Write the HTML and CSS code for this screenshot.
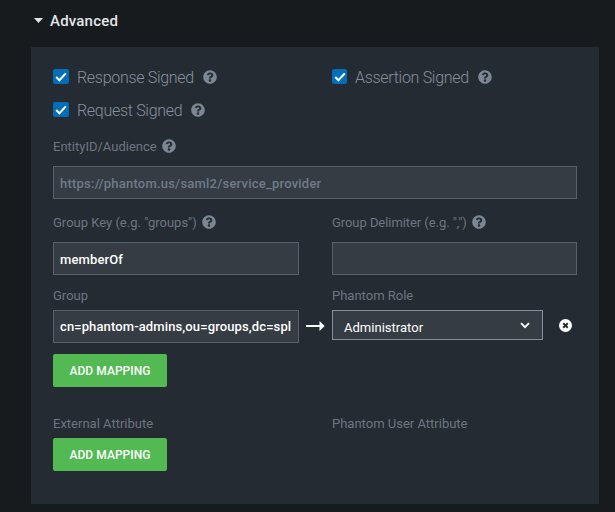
FILE: index.html
```
<!DOCTYPE html>
<html lang="en">
<head>
<meta charset="utf-8">
<title>Advanced</title>
<link rel="stylesheet" href="styles.css">
</head>
<body>
<svg class="defs" width="0" height="0">
  <symbol id="help" viewBox="0 0 512 512"><path fill="currentColor" d="M504 256c0 136.997-111.043 248-248 248S8 392.997 8 256C8 119.083 119.043 8 256 8s248 111.083 248 248zM262.655 90c-54.497 0-89.255 22.957-116.549 63.758-3.536 5.286-2.353 12.415 2.715 16.258l34.699 26.31c5.205 3.947 12.621 3.008 16.665-2.122 17.864-22.658 30.113-35.797 57.303-35.797 20.429 0 45.698 13.148 45.698 32.958 0 14.976-12.363 22.667-32.534 33.976C247.128 238.528 216 254.941 216 296v4c0 6.627 5.373 12 12 12h56c6.627 0 12-5.373 12-12v-1.333c0-28.462 83.186-29.647 83.186-106.667 0-58.002-60.165-102-116.531-102zM256 338c-25.365 0-46 20.635-46 46 0 25.364 20.635 46 46 46s46-20.636 46-46c0-25.365-20.635-46-46-46z"/></symbol>
  <symbol id="check" viewBox="0 0 16 15"><path d="M3.2 8.1 6.4 11.2 12.8 4.4" fill="none" stroke="#fff" stroke-width="2.1"/></symbol>
</svg>
<div class="heading"><svg class="caret" viewBox="0 0 9 5"><path d="M0 0h9L4.5 5z" fill="currentColor"/></svg><h1>Advanced</h1></div>
<main class="panel">
  <div class="row checks">
    <div class="option"><span class="box"><svg><use href="#check"/></svg></span><span>Response Signed</span><svg class="help"><use href="#help"/></svg></div>
    <div class="option"><span class="box narrow"><svg><use href="#check"/></svg></span><span>Assertion Signed</span><svg class="help"><use href="#help"/></svg></div>
    <div class="option"><span class="box"><svg><use href="#check"/></svg></span><span>Request Signed</span><svg class="help"><use href="#help"/></svg></div>
  </div>
  <section class="entity">
    <div class="label"><span>EntityID/Audience</span><svg class="help"><use href="#help"/></svg></div>
    <div class="input placeholder">https://phantom.us/saml2/service_provider</div>
  </section>
  <section class="row keys">
    <div><div class="label"><span>Group Key (e.g. "groups")</span><svg class="help"><use href="#help"/></svg></div><div class="input">memberOf</div></div>
    <div><div class="label delimiter"><span>Group Delimiter (e.g. ",")</span><svg class="help"><use href="#help"/></svg></div><div class="input"></div></div>
  </section>
  <section class="mapping">
    <div class="group"><div class="label">Group</div><div class="input dn">cn=phantom-admins,ou=groups,dc=spl</div></div>
    <svg class="arrow" viewBox="0 0 19 12"><path d="M0 5h13.5V1l5.2 5-5.2 5V7H0z" fill="currentColor"/></svg>
    <div class="role"><div class="label">Phantom Role</div><div class="select"><span>Administrator</span><svg viewBox="0 0 10 7"><path d="m1 1.2 4 4 4-4" fill="none" stroke="currentColor" stroke-width="1.8"/></svg></div></div>
    <svg class="remove" viewBox="0 0 12 12"><circle cx="6" cy="6" r="6" fill="#fff"/><path d="m3.9 3.9 4.2 4.2m0-4.2L3.9 8.1" stroke="#252b33" stroke-width="1.7"/></svg>
  </section>
  <button>ADD MAPPING</button>
  <section class="row attributes"><div class="label">External Attribute</div><div class="label">Phantom User Attribute</div></section>
  <button>ADD MAPPING</button>
</main>
</body>
</html>
```
FILE: styles.css
```
* { box-sizing: border-box; }
body { margin: 0; height: 512px; overflow: hidden; background: #171b1e; color: #fff; font-family: Roboto, "Liberation Sans", sans-serif; }
svg { display: block; flex: none; }
.defs { position: absolute; }
.heading { display: flex; align-items: center; height: 47px; padding: 0 0 6px 34px; color: #e3e6e9; }
.caret { width: 9px; height: 5px; margin-right: 7px; }
h1 { margin: 0; font-size: 15px; line-height: 20px; font-weight: 500; letter-spacing: .2px; }
.panel { width: 568px; height: 457px; margin-left: 31px; padding: 14px 22px 0; background: #252b33; }
.row { display: grid; grid-template-columns: 246px 245px; column-gap: 33px; }
.checks { grid-auto-rows: 33px; }
.option { display: flex; align-items: center; color: #87919c; font-size: 16px; font-weight: 300; letter-spacing: -.3px; line-height: 33px; }
.box { width: 16px; height: 15px; margin: 0 8px 2px 0; border-radius: 2px; background: #006eb9; }
.box.narrow { width: 15px; }
.box svg { width: 16px; height: 15px; }
.help { width: 14px; height: 14px; color: #7b8793; }
.option .help { margin: 0 0 1px 9px; }
.label { display: flex; align-items: center; height: 20px; color: #6d7680; font-size: 13px; font-weight: 400; white-space: pre; }
.label .help { margin: 0 0 1px 5px; }
.delimiter { letter-spacing: -.06px; }
.entity { margin-top: 9px; }
.entity .input { margin-top: 10px; }
.input { height: 33px; padding: 0 6px; border: 1px solid #56616d; background: #363c44; font-size: 13px; font-weight: 500; line-height: 33px; letter-spacing: .12px; white-space: nowrap; overflow: hidden; }
.placeholder { color: #6f7b88; letter-spacing: .22px; }
.keys { margin-top: 13px; }
.keys .input { margin-top: 10px; }
.mapping { display: flex; height: 58px; margin-top: 10px; }
.group { width: 246px; }
.mapping .input, .select { margin-top: 5px; }
.mapping .input { line-height: 31px; }
.arrow { width: 19px; height: 12px; margin: 35px 7px 0; }
.role { width: 211px; }
.select { display: flex; align-items: center; justify-content: space-between; height: 30px; padding: 4px 12px 0 11px; border: 1px solid #84909d; background: #363c44; font-size: 13px; letter-spacing: .02px; }
.select svg { width: 10px; height: 7px; margin-bottom: 4px; }
.remove { width: 13px; height: 13px; margin: 34px 0 0 16px; }
button { display: block; width: 114px; height: 33px; margin: 11px 0 0; padding: 0; border: 0; border-radius: 2px; background: #53b953; color: #fff; font: 500 12px/34px Roboto, sans-serif; letter-spacing: .05px; }
.attributes { margin-top: 26px; }
.attributes + button { margin-top: 5px; }
```
